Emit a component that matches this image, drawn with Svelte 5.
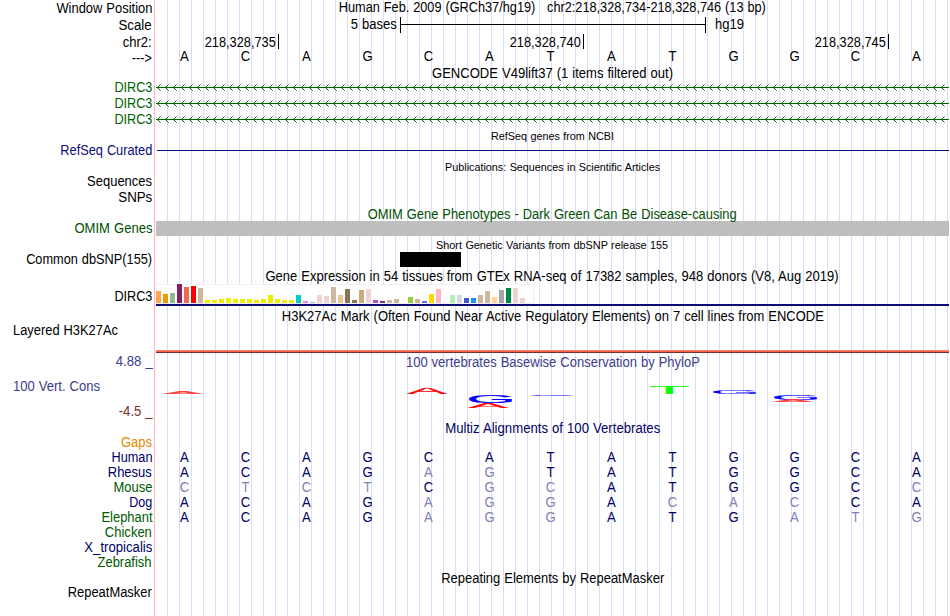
<script>
  // Bases of the window, one cell per position
  const bases = 'ACAGCATATGGCA'.split('');

  const ticks = ['218,328,735', '218,328,740', '218,328,745'];

  const species = [
    { name: 'Gaps', width: 31, color: 'orange', seq: '' },
    { name: 'Human', width: 41, color: 'navy', seq: 'ACAGCATATGGCA' },
    { name: 'Rhesus', width: 44, color: 'navy', seq: 'ACAGAGTATGGCA' },
    { name: 'Mouse', width: 39, color: 'green', seq: 'CTCTCGCATGGCC' },
    { name: 'Dog', width: 23, color: 'navy', seq: 'ACAGAGGACACCA' },
    { name: 'Elephant', width: 51, color: 'green', seq: 'ACAGAGGATGATG' },
    { name: 'Chicken', width: 47, color: 'green', seq: '' },
    { name: 'X_tropicalis', width: 68, color: 'navy', seq: '' },
    { name: 'Zebrafish', width: 54, color: 'green', seq: '' }
  ];

  // GTEx tissues: [bar height, color]
  const tissues = [
    [12, '#ffa54f'], [9, '#ee9a00'], [10, '#8fbc8f'], [19, '#8b1c62'], [16, '#ee6a50'],
    [17, '#ff0000'], [15, '#cdb79e'], [3, '#eeee00'], [3, '#eeee00'], [4, '#eeee00'],
    [5, '#eeee00'], [4, '#eeee00'], [4, '#eeee00'], [4, '#eeee00'], [3, '#eeee00'],
    [4, '#eeee00'], [8, '#eeee00'], [4, '#eeee00'], [3, '#eeee00'], [3, '#eeee00'],
    [8, '#00cdcd'], [2, '#ee82ee'], [1, '#9ac0cd'], [8, '#eed5d2'], [7, '#eed5d2'],
    [16, '#cdb79e'], [8, '#eec591'], [14, '#8b7355'], [3, '#8b7355'], [13, '#cdaa7d'],
    [14, '#eed5d2'], [3, '#b452cd'], [2, '#7a378b'], [3, '#cdb79e'], [4, '#cdb79e'],
    [0, '#cdb79e'], [6, '#9acd32'], [4, '#cdb79e'], [2, '#7a67ee'], [9, '#ffd700'],
    [14, '#ffb6c1'], [0, '#cd9b1d'], [8, '#b4eeb4'], [8, '#d9d9d9'], [5, '#3a5fcd'],
    [5, '#1e90ff'], [8, '#cdb79e'], [12, '#cdb79e'], [6, '#ffd39b'], [13, '#a6a6a6'],
    [15, '#008b45'], [15, '#eed5d2'], [5, '#eed5d2'], [0, '#ff00ff']
  ];

  // Ink box of each base letter at font-size 20.48: left, right, height
  const ink = {
    A: [0, 13.62, 14.09],
    C: [1.02, 13.98, 14.5],
    G: [1.03, 14.66, 14.5],
    T: [0.42, 12.08, 14.09]
  };

  // Conservation logo, coordinates relative to the data column
  const logo = [
    { base: 'A', x: 7, y: 392, w: 40, h: 1.85, color: '#ff3c3c' },
    { base: 'A', x: 251, y: 388, w: 40, h: 6, color: '#ff0000' },
    { base: 'G', x: 313.5, y: 395.2, w: 42.5, h: 7.6, color: '#0000ff' },
    { base: 'A', x: 312, y: 403.2, w: 40, h: 4.6, color: '#ff0000' },
    { base: 'C', x: 375, y: 395, w: 42, h: 0.8, color: '#0000ff' },
    { base: 'T', x: 494.5, y: 386, w: 37.5, h: 8, color: '#00ff00' },
    { base: 'G', x: 557.5, y: 390.2, w: 42.5, h: 3.6, color: '#0000ff' },
    { base: 'G', x: 618.5, y: 395.2, w: 42.5, h: 4.8, color: '#0000ff' },
    { base: 'A', x: 617, y: 400, w: 40, h: 1.85, color: '#ff3c3c' }
  ];

  function stretch({ base, x, y, w, h }) {
    const [left, right, height] = ink[base];
    const sx = w / (right - left);
    const sy = h / height;
    return `translate(${x - left * sx} ${y - 369 + h}) scale(${sx} ${sy})`;
  }

  // Condense the text so that it takes the given width
  function fit(node, width) {
    const natural = node.getBoundingClientRect().width;
    node.style.transform = `scaleX(${width / natural})`;
  }
</script>

{#snippet label(text, width, color = 'black')}
  <div class="label {color}"><span class="fit" use:fit={width}>{text}</span></div>
{/snippet}

{#snippet title(text, width, kind = '')}
  <div class="title {kind}"><span class="fit" use:fit={width}>{text}</span></div>
{/snippet}

{#snippet arrows(id)}
  <svg class="arrows" width="793" height="16">
    <defs>
      <pattern {id} x="1" width="8" height="16" patternUnits="userSpaceOnUse">
        <path d="M0 7.5H8" stroke="#006400" />
        <path d="M3.5 4.5L0.5 7.5L3.5 10.5" stroke="#006400" fill="none" />
      </pattern>
    </defs>
    <rect width="793" height="16" fill="url(#{id})" />
  </svg>
{/snippet}

<div class="browser">
  <div class="row h17">
    {@render label('Window Position', 96)}
    {@render title('Human Feb. 2009 (GRCh37/hg19)\u00a0\u00a0\u00a0chr2:218,328,734-218,328,746 (13 bp)', 427)}
  </div>
  <div class="row scale h17">
    {@render label('Scale', 33)}
    <div class="data">
      <div class="scale-text"><span class="fit" use:fit={46}>5 bases</span></div>
      <div class="scale-bar"></div>
      <span class="fit start" use:fit={29}>hg19</span>
    </div>
  </div>
  <div class="row ruler h15">
    {@render label('chr2:', 29)}
    <div class="data">
      {#each ticks as tick}
        <div class="tick"><span class="fit" use:fit={71}>{tick}</span></div>
      {/each}
    </div>
  </div>
  <div class="row strand h17">
    {@render label('--->', 20)}
    <div class="bases">
      {#each bases as base}<span>{base}</span>{/each}
    </div>
  </div>

  <div class="row h14 no-label">
    {@render title('GENCODE V49lift37 (1 items filtered out)', 241)}
  </div>
  {#each [1, 2, 3] as n}
    <div class="row h16">
      {@render label('DIRC3', 38, 'leaf')}
      <div class="data">{@render arrows('arrows-' + n)}</div>
    </div>
  {/each}

  <div class="row h15 no-label">{@render title('RefSeq genes from NCBI', 123, 'small')}</div>
  <div class="row h16">
    {@render label('RefSeq Curated', 92, 'refseq')}
    <div class="data"><div class="refseq-line"></div></div>
  </div>

  <div class="row h15 no-label">
    {@render title('Publications: Sequences in Scientific Articles', 215, 'small')}
  </div>
  <div class="row h16">{@render label('Sequences', 65)}</div>
  <div class="row h16">{@render label('SNPs', 34)}</div>

  <div class="row h15 no-label">
    {@render title('OMIM Gene Phenotypes - Dark Green Can Be Disease-causing', 369, 'p1 omim')}
  </div>
  <div class="row h15">
    {@render label('OMIM Genes', 78, 'omim')}
    <div class="data omim-bar"></div>
  </div>

  <div class="row h16 no-label">
    {@render title('Short Genetic Variants from dbSNP release 155', 232, 'small low')}
  </div>
  <div class="row h15">
    {@render label('Common dbSNP(155)', 126)}
    <div class="data"><div class="snp"></div></div>
  </div>

  <div class="row h17 no-label">
    {@render title('Gene Expression in 54 tissues from GTEx RNA-seq of 17382 samples, 948 donors (V8, Aug 2019)', 573, 'p2')}
  </div>
  <div class="row gtex">
    {@render label('DIRC3', 38)}
    <div class="data">
      <div class="chart">
        {#each tissues as [height, color]}
          <i style="height: {height}px; background: {color}"></i>
        {/each}
      </div>
    </div>
  </div>

  <div class="row h17 no-label">
    {@render title('H3K27Ac Mark (Often Found Near Active Regulatory Elements) on 7 cell lines from ENCODE', 542, 'p3')}
  </div>
  <div class="row h3k">
    <div class="label left"><span class="fit start" use:fit={105}>Layered H3K27Ac</span></div>
    <div class="data"><div class="signal"></div></div>
  </div>

  <div class="row cons">
    <div class="cons-labels">
      <div class="label purple"><span class="fit" use:fit={37}>4.88 _</span></div>
      <div class="label left purple"><span class="fit start" use:fit={87}>100 Vert. Cons</span></div>
      <div class="label maroon"><span class="fit" use:fit={34}>-4.5 _</span></div>
    </div>
    <div class="data">
      {@render title('100 vertebrates Basewise Conservation by PhyloP', 294, 'p2 purple')}
      <svg class="logo" width="793" height="50">
        {#each logo as item}
          <text transform={stretch(item)} fill={item.color} stroke={item.color}>{item.base}</text>
        {/each}
      </svg>
    </div>
  </div>

  <div class="row h15 no-label">
    {@render title('Multiz Alignments of 100 Vertebrates', 215, 'p1 navy')}
  </div>
  {#each species as { name, width, color, seq }}
    <div class="row h15">
      {@render label(name, width, color)}
      <div class="bases navy">
        {#each seq as base, i}
          <span class:mismatch={base !== bases[i]}>{base}</span>
        {/each}
      </div>
    </div>
  {/each}

  <div class="row h15 no-label">{@render title('Repeating Elements by RepeatMasker', 223, 'p1')}</div>
  <div class="row h15">{@render label('RepeatMasker', 84)}</div>
</div>

<style>
  :global(body) {
    margin: 0;
    background: #fff;
  }

  .browser {
    box-sizing: border-box;
    width: 949px;
    height: 616px;
    overflow: hidden;
    font: 13.8px/15px "Liberation Sans", Arial, Helvetica, sans-serif;
    color: #000;
    white-space: nowrap;
    word-spacing: 0.4px;
    background:
      linear-gradient(#ffb4b4, #ffb4b4) 154px 0 / 1px 100% no-repeat,
      repeating-linear-gradient(90deg, transparent 0 11px, #dcdcf8 11px 12px) 156px 0 / 793px 100% no-repeat;
  }

  .row {
    display: flex;
  }

  .h14 { height: 14px; }
  .h15 { height: 15px; }
  .h16 { height: 16px; }
  .h17 { height: 17px; }

  .no-label {
    padding-left: 156px;
  }

  .fit {
    display: inline-block;
  }

  .label {
    display: flex;
    flex: none;
    justify-content: flex-end;
    box-sizing: border-box;
    width: 156px;
    padding-right: 4px;
  }

  .label .fit,
  .scale-text .fit,
  .tick .fit {
    transform-origin: right;
  }

  .fit.start,
  .label .fit.start {
    transform-origin: left;
  }

  .label.left {
    justify-content: flex-start;
    padding-left: 13px;
  }

  .data,
  .title {
    flex: 1;
  }

  .title {
    text-align: center;
  }

  .title.small {
    padding-top: 2px;
    font-size: 11.5px;
    line-height: 13px;
  }

  .title.small.low { padding-top: 3px; }
  .p1 { padding-top: 1px; }
  .p2 { padding-top: 2px; }
  .p3 { padding-top: 3px; }

  .h17 > .label {
    padding-top: 1px;
  }

  .leaf { color: #006400; }
  .refseq { color: #0c0c78; }
  .omim { color: #005000; }
  .navy { color: #000064; }
  .green { color: #005a00; }
  .orange { color: #e68a00; }
  .purple { color: #3c3c8c; }
  .maroon { color: #783232; }

  .scale .data {
    display: flex;
  }

  .scale-text {
    width: 241px;
    padding-right: 3px;
    text-align: right;
  }

  .scale-bar {
    box-sizing: border-box;
    width: 306px;
    height: 16px;
    margin-right: 9px;
    border: solid #000;
    border-width: 0 1px;
    background: linear-gradient(#000, #000) 0 7px / 100% 1px no-repeat;
  }

  .ruler .label,
  .tick {
    padding-top: 1px;
  }

  .ruler .data {
    display: flex;
  }

  .tick {
    box-sizing: border-box;
    width: 305px;
    height: 15px;
    padding-right: 2px;
    border-right: 1px solid #000;
    text-align: right;
  }

  .tick:first-child {
    width: 123px;
  }

  .strand > .label {
    padding-top: 2px;
  }

  .bases {
    display: flex;
    margin-left: -1.6px;
  }

  .bases span {
    width: 61px;
    text-align: center;
    transform: scaleX(0.95);
  }

  .mismatch {
    color: #8080b4;
  }

  .arrows,
  .logo {
    display: block;
  }

  .refseq-line {
    height: 1px;
    margin: 7px 0 0 1px;
    background: #0c0c78;
  }

  .omim-bar {
    background: #bebebe;
  }

  .snp {
    width: 61px;
    height: 15px;
    margin-left: 244px;
    background: #000;
  }

  .gtex {
    height: 22px;
  }

  .gtex .label {
    padding-top: 5px;
  }

  .gtex .data {
    box-sizing: border-box;
    border-bottom: 2px solid #0c0c78;
  }

  .chart {
    display: flex;
    align-items: flex-end;
    gap: 2px;
    box-sizing: border-box;
    width: 378px;
    height: 20px;
    border: solid #f0f0f0;
    border-width: 1px 1px 1px 0;
    background: #fff;
  }

  .chart i {
    flex: none;
    width: 5px;
  }

  .h3k {
    height: 30px;
  }

  .signal {
    height: 1px;
    margin-top: 27px;
    border-top: 1px solid #ff7d6e;
    border-bottom: 1px solid #783232;
    background: #ff6446;
  }

  .cons {
    height: 67px;
  }

  .cons-labels {
    display: flex;
    flex-direction: column;
    gap: 10px;
    padding-top: 1px;
  }

  .cons-labels .label {
    padding-right: 3px;
  }

  .cons .title {
    height: 14px;
  }

  .logo text {
    font-size: 20.48px;
    stroke-width: 0.35px;
  }
</style>
